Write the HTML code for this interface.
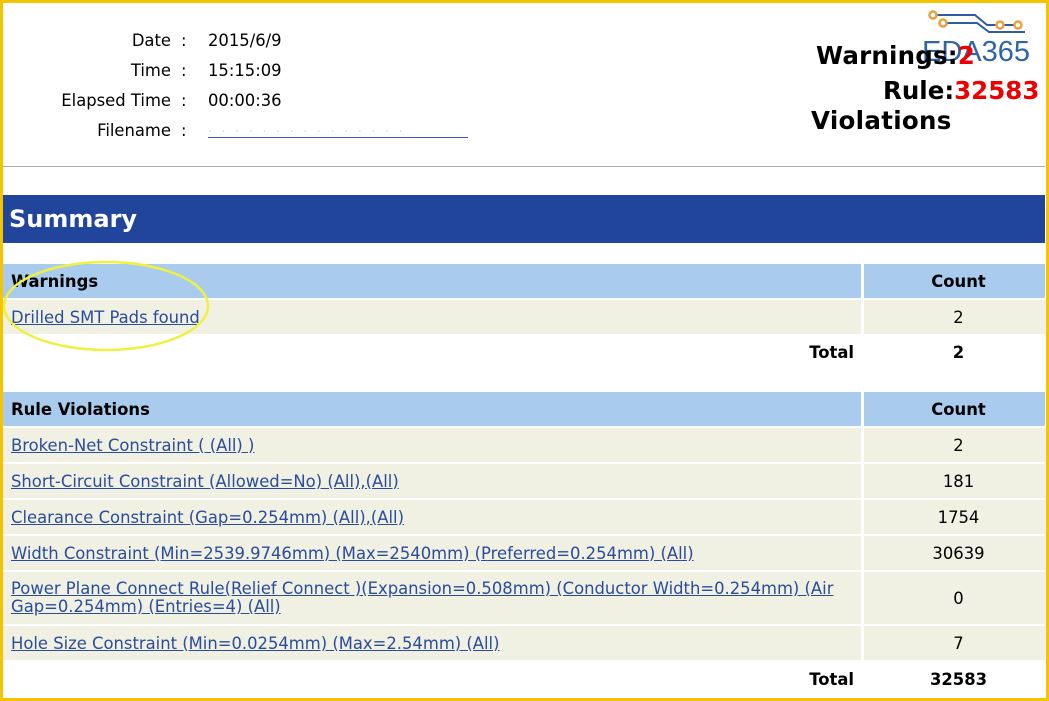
<!DOCTYPE html>
<html><head><meta charset="utf-8"><style>
body{margin:0;width:1049px;height:701px;overflow:hidden;background:#fff;font-family:"DejaVu Sans",Verdana,sans-serif;font-size:16.4px;color:#000;position:relative}
.frame{position:absolute;left:0;top:0;width:1043px;height:695px;border:3px solid #f5c400;}
.a{position:absolute}
.lbl{position:absolute;width:171px;text-align:right;left:0}
a{color:#2a4c9c;text-decoration:underline}
.row{position:absolute;left:3px;width:1042px}
.c1,.c2{position:absolute;top:0;bottom:0;display:flex;align-items:center}
.c1{left:0;width:858px;padding-left:8px;box-sizing:border-box}
.c2{left:861px;width:181px;justify-content:center;padding-left:8px;box-sizing:border-box}
.hd .c1,.hd .c2{background:#a8cbee;font-weight:bold}
.bd .c1,.bd .c2{background:#f0f0e3}
.tot .c1{justify-content:flex-end;padding-right:7px;font-weight:bold}
.tot .c2{font-weight:bold}
</style></head><body>
<div class="frame"></div>
<div class="lbl" style="top:31px">Date</div><div class="a" style="left:181px;top:31px">:</div><div class="a" style="left:208px;top:31px">2015/6/9</div>
<div class="lbl" style="top:61px">Time</div><div class="a" style="left:181px;top:61px">:</div><div class="a" style="left:208px;top:61px">15:15:09</div>
<div class="lbl" style="top:91px">Elapsed Time</div><div class="a" style="left:181px;top:91px">:</div><div class="a" style="left:208px;top:91px">00:00:36</div>
<div class="lbl" style="top:121px">Filename</div><div class="a" style="left:181px;top:121px">:</div><div class="a" style="left:208px;top:121px;width:260px;height:16px;border-bottom:1px solid #3a5cb0;color:#c8d4ee;font-size:12px;letter-spacing:3px">. . . .  . .  . . . . . .  . . .</div>
<svg class="a" style="left:925px;top:10px" width="100" height="26"><g fill="none" stroke="#2e5c9e" stroke-width="2"><path d="M8 5H50L62 15H92"/><path d="M18 13H52L64 22H100"/></g><g fill="#fff" stroke="#e8a040" stroke-width="2.5"><circle cx="8" cy="5" r="3.5"/><circle cx="18" cy="13" r="3.5"/><circle cx="75" cy="15" r="3.5"/><circle cx="93" cy="15" r="3.5"/></g></svg>
<div class="a" style="left:922px;top:36px;font-family:'Liberation Sans',sans-serif;font-size:29px;color:#2f64a8">EDA365</div>
<div class="a" style="left:816px;top:41px;font-size:24.5px;font-weight:bold;letter-spacing:0.2px">Warnings:<span style="color:#e00">2</span></div>
<div class="a" style="left:883px;top:76px;font-size:24.5px;font-weight:bold">Rule:<span style="color:#e00">32583</span></div>
<div class="a" style="left:811px;top:106px;font-size:24.5px;font-weight:bold;letter-spacing:0.3px">Violations</div>
<div class="a" style="left:3px;top:166px;width:1042px;height:1px;background:#aaa"></div>
<div class="a" style="left:3px;top:195px;width:1042px;height:48px;background:#22459c;color:#fff;font-weight:bold;font-size:24px;line-height:48px;padding-left:6px;box-sizing:border-box">Summary</div>
<div class="row hd" style="top:264px;height:34px"><div class="c1">Warnings</div><div class="c2">Count</div></div>
<div class="row bd" style="top:300px;height:34px"><div class="c1"><a>Drilled SMT Pads found</a></div><div class="c2">2</div></div>
<div class="row tot" style="top:335px;height:35px"><div class="c1">Total</div><div class="c2">2</div></div>
<div class="row hd" style="top:392px;height:34px"><div class="c1">Rule Violations</div><div class="c2">Count</div></div>
<div class="row bd" style="top:428px;height:34px"><div class="c1"><a>Broken-Net Constraint ( (All) )</a></div><div class="c2">2</div></div>
<div class="row bd" style="top:464px;height:34px"><div class="c1"><a>Short-Circuit Constraint (Allowed=No) (All),(All)</a></div><div class="c2">181</div></div>
<div class="row bd" style="top:500px;height:34px"><div class="c1"><a>Clearance Constraint (Gap=0.254mm) (All),(All)</a></div><div class="c2">1754</div></div>
<div class="row bd" style="top:536px;height:34px"><div class="c1"><a>Width Constraint (Min=2539.9746mm) (Max=2540mm) (Preferred=0.254mm) (All)</a></div><div class="c2">30639</div></div>
<div class="row bd" style="top:572px;height:52px"><div class="c1" style="padding-right:20px"><a style="line-height:18px">Power Plane Connect Rule(Relief Connect )(Expansion=0.508mm) (Conductor Width=0.254mm) (Air Gap=0.254mm) (Entries=4) (All)</a></div><div class="c2">0</div></div>
<div class="row bd" style="top:626px;height:34px"><div class="c1"><a>Hole Size Constraint (Min=0.0254mm) (Max=2.54mm) (All)</a></div><div class="c2">7</div></div>
<div class="row tot" style="top:661px;height:36px"><div class="c1">Total</div><div class="c2">32583</div></div>
<svg class="a" style="left:0;top:255px" width="220" height="105"><ellipse cx="106" cy="51" rx="102" ry="44" fill="none" stroke="#f0f040" stroke-width="2.5"/></svg>
</body></html>
